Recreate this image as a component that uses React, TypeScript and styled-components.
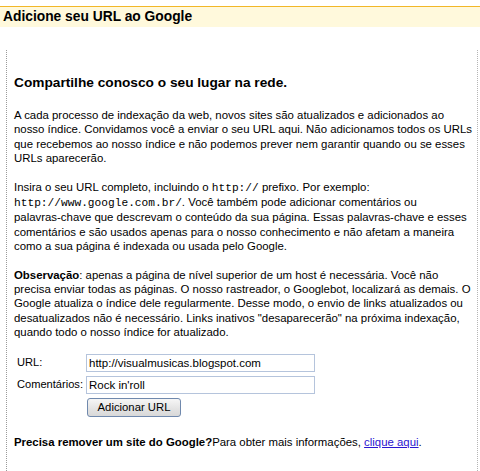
import React from "react";
import styled, { createGlobalStyle } from "styled-components";

const GlobalStyle = createGlobalStyle`
  html, body { margin: 0; padding: 0; background: #ffffff; }
  body { font-family: "Liberation Sans", Arial, sans-serif; color: #000; }
`;

const Page = styled.div`
  padding-top: 6px;
  width: 480px;
  height: 471px;
  box-sizing: border-box;
  overflow: hidden;
  display: flex;
  flex-direction: column;
`;

const TitleBar = styled.div`
  border-top: 1px solid #f2b728;
  background: #fff9dc;
  height: 20px;
  line-height: 20px;
  padding-left: 3px;
  font-size: 13.8px;
  font-weight: bold;
`;

const Box = styled.div`
  margin: 23px 0 0 6px;
  width: 472px;
  box-sizing: border-box;
  flex: 1;
  border-left: 1px dotted #9a9a9a;
  border-right: 1px dotted #b5b5b5;
  padding: 25px 4px 0 7px;
  font-size: 11.4px;
  line-height: 14.4px;
`;

const Heading = styled.h2`
  margin: 0 0 17px 0;
  font-size: 13.7px;
  line-height: 16px;
  font-weight: bold;
`;

const Para = styled.div`
  margin: 0 0 14px 0;
`;

const Line = styled.span`
  display: block;
  white-space: nowrap;
`;

const Mono = styled.code`
  font-family: "Liberation Mono", "Courier New", monospace;
  font-size: 11.2px;
`;

const Form = styled.form`
  display: grid;
  grid-template-columns: 69px 229px;
  row-gap: 4px;
  padding-left: 3px;
  margin: 12px 0 0 0;
  align-items: center;
`;

const Label = styled.label`
  font-size: 11.1px;
`;

const Input = styled.input`
  box-sizing: border-box;
  width: 229px;
  height: 18px;
  border: 1px solid #b5c4dc;
  padding: 0 2px;
  margin: 0;
  font-family: "Liberation Sans", Arial, sans-serif;
  font-size: 11.5px;
  color: #000;
  background: #fff;
  outline: none;
`;

const Button = styled.button`
  grid-column: 2;
  justify-self: start;
  width: 94px;
  height: 19px;
  box-sizing: border-box;
  margin: 0 0 0 1px;
  padding: 0;
  border: 1px solid #7089ad;
  border-radius: 3px;
  background: linear-gradient(#f6f6f6, #e4e4e4 55%, #d8d8d8);
  font-family: "Liberation Sans", Arial, sans-serif;
  font-size: 11.3px;
  color: #000;
`;

const Footer = styled.p`
  margin: 18px 0 0 0;
`;

const Link = styled.a`
  color: #2a16d0;
  text-decoration: underline;
`;

export default function App() {
  return (
    <>
      <GlobalStyle />
      <Page>
        <TitleBar>Adicione seu URL ao Google</TitleBar>
        <Box>
          <Heading>Compartilhe conosco o seu lugar na rede.</Heading>
          <Para>
            <Line>A cada processo de indexação da web, novos sites são atualizados e adicionados ao</Line>
            <Line>nosso índice. Convidamos você a enviar o seu URL aqui. Não adicionamos todos os URLs</Line>
            <Line>que recebemos ao nosso índice e não podemos prever nem garantir quando ou se esses</Line>
            <Line>URLs aparecerão.</Line>
          </Para>
          <Para>
            <Line>
              Insira o seu URL completo, incluindo o <Mono>http://</Mono> prefixo. Por exemplo:
            </Line>
            <Line>
              <Mono>http://www.google.com.br/</Mono>. Você também pode adicionar comentários ou
            </Line>
            <Line>palavras-chave que descrevam o conteúdo da sua página. Essas palavras-chave e esses</Line>
            <Line>comentários e são usados apenas para o nosso conhecimento e não afetam a maneira</Line>
            <Line>como a sua página é indexada ou usada pelo Google.</Line>
          </Para>
          <Para>
            <Line>
              <b>Observação</b>: apenas a página de nível superior de um host é necessária. Você não
            </Line>
            <Line>precisa enviar todas as páginas. O nosso rastreador, o Googlebot, localizará as demais. O</Line>
            <Line>Google atualiza o índice dele regularmente. Desse modo, o envio de links atualizados ou</Line>
            <Line>desatualizados não é necessário. Links inativos "desaparecerão" na próxima indexação,</Line>
            <Line>quando todo o nosso índice for atualizado.</Line>
          </Para>
          <Form onSubmit={(e) => e.preventDefault()}>
            <Label htmlFor="url">URL:</Label>
            <Input id="url" defaultValue="http://visualmusicas.blogspot.com" />
            <Label htmlFor="com">Comentários:</Label>
            <Input id="com" defaultValue="Rock in'roll" />
            <Button type="submit">Adicionar URL</Button>
          </Form>
          <Footer>
            <b>Precisa remover um site do Google?</b>Para obter mais informações,{" "}
            <Link href="#">clique aqui</Link>.
          </Footer>
        </Box>
      </Page>
    </>
  );
}
